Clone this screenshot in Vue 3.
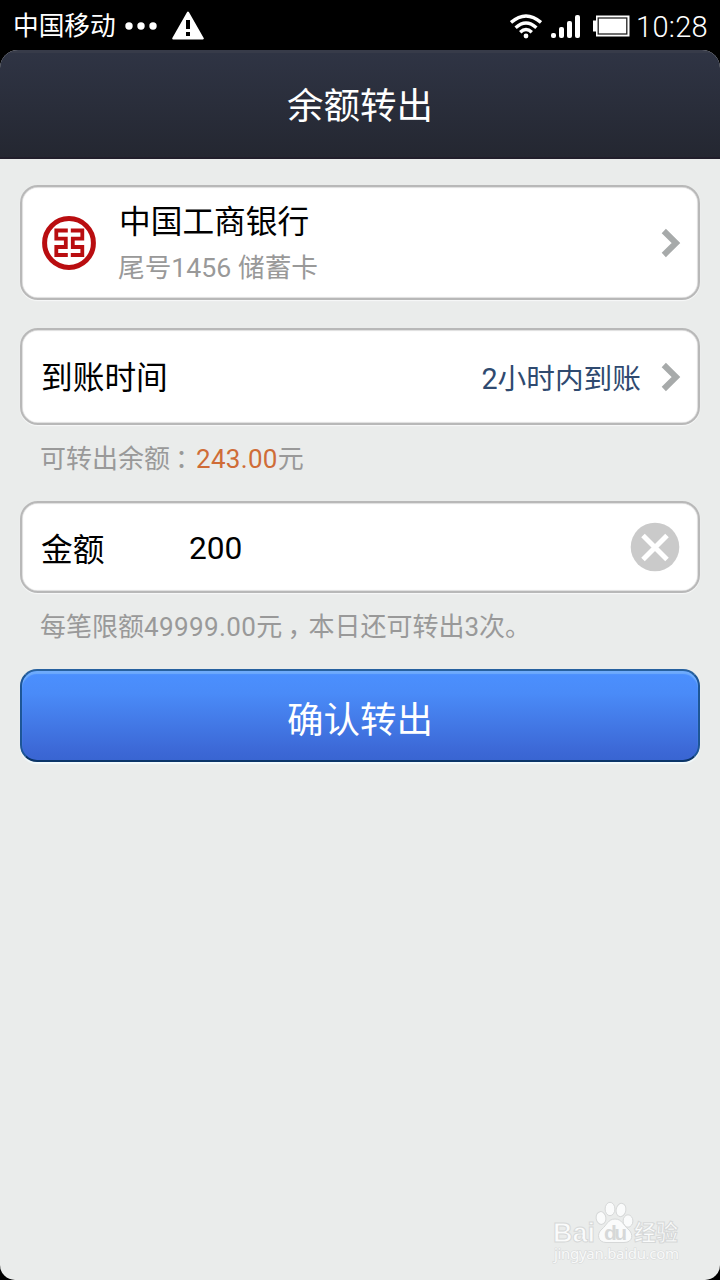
<script setup>
import { ref } from 'vue'

const amount = ref('200')
const bars = [5, 11, 17, 23]
</script>

<template>
  <div class="screen">
    <header class="status">
      <span class="carrier">中国移动</span>
      <svg class="dots" width="32" height="8" viewBox="0 0 32 8" fill="#fff">
        <circle cx="4" cy="4" r="3.7" /><circle cx="16" cy="4" r="3.7" /><circle cx="28" cy="4" r="3.7" />
      </svg>
      <svg class="warn" width="32" height="29" viewBox="0 0 32 29">
        <path d="M16 1.5 30.8 27.5H1.2Z" fill="#fff" stroke="#fff" stroke-width="2" stroke-linejoin="round" />
        <path d="M14 9h4v9h-4zM14 21h4v4h-4z" fill="#000" />
      </svg>
      <span class="spacer"></span>
      <svg class="wifi" width="32" height="25" viewBox="0 0 32 25" fill="none" stroke="#fff" stroke-width="3.4">
        <path d="M1 8.5Q16-4.5 31 8.5" />
        <path d="M5.6 13.7Q16 4.2 26.4 13.7" />
        <path d="M10.2 18.3Q16 12.6 21.8 18.3" />
        <circle cx="16" cy="22" r="2.4" fill="#fff" stroke="none" />
      </svg>
      <div class="signal">
        <i v-for="h in bars" :key="h" :style="{ height: h + 'px' }"></i>
      </div>
      <svg class="battery" width="37" height="22" viewBox="0 0 37 22">
        <path d="M3 .5h33.500v21H3v-5H0v-11h3z" fill="#fff" />
        <rect x="5.200" y="3" width="28.600" height="16" fill="#fff" stroke="#222" stroke-width="1.300" />
      </svg>
      <span class="clock">10:28</span>
    </header>

    <div class="app">
      <div class="titlebar"><h1>余额转出</h1></div>

      <main>
        <section class="card bank">
          <svg class="logo" width="56" height="56" viewBox="0 0 56 56" fill="none" stroke="#b90d10">
            <circle cx="28" cy="28" r="24.400" stroke-width="5" />
            <g stroke-width="3.800">
              <path d="M26.800 15.500H15.300V23.700H24.800V32H15.300V40H26.800" />
              <path d="M29.800 15.500H41.300V23.700H31.800V32H41.300V40H29.800" />
            </g>
          </svg>
          <div class="info">
            <div class="name">中国工商银行</div>
            <div class="tail">尾号1456 储蓄卡</div>
          </div>
          <svg class="chev" width="20" height="30" viewBox="0 0 20 30"><path d="M2.800 3 15 15 2.800 27" fill="none" stroke="#a7aaaa" stroke-width="6" /></svg>
        </section>

        <section class="card arrival">
          <span class="label">到账时间</span>
          <span class="when">2小时内到账</span>
          <svg class="chev" width="20" height="30" viewBox="0 0 20 30"><path d="M2.800 3 15 15 2.800 27" fill="none" stroke="#a7aaaa" stroke-width="6" /></svg>
        </section>

        <p class="note balance">可转出余额<span class="mark">：</span><b>243.00</b>元</p>

        <section class="card amount">
          <span class="label">金额</span>
          <span class="value">{{ amount }}</span>
          <svg class="clear" width="50" height="50" viewBox="0 0 50 50" @click="amount = ''">
            <circle cx="25" cy="25" r="24.300" fill="#cacaca" />
            <path d="M13 13.500 37 37.500M37 13.500 13 37.500" stroke="#fff" stroke-width="5" />
          </svg>
        </section>

        <p class="note limit">每笔限额<span class="num">49999.00</span>元<span class="mark">，</span>本日还可转出3次。</p>

        <button class="confirm">确认转出</button>
      </main>

      <svg class="watermark" width="132" height="68" viewBox="0 0 132 68">
        <g fill="#fafbfb" stroke="#d6d8d8" stroke-width="1">
          <ellipse cx="50" cy="21" rx="4.900" ry="6.400" transform="rotate(-8 50 21)" />
          <ellipse cx="59" cy="12" rx="4.900" ry="6.700" />
          <ellipse cx="70" cy="13" rx="4.900" ry="6.700" transform="rotate(12 70 13)" />
          <ellipse cx="77" cy="24" rx="4.900" ry="6.200" />
          <path d="M64 22C57 22 56 28 51 32C45 37 47 45.500 55 45.500H73C82 45.500 83 37 77 32C72 28 71 22 64 22Z" />
          <text class="brand" x="2" y="45" textLength="42" lengthAdjust="spacingAndGlyphs">Bai</text>
          <text class="cn" x="83" y="43" textLength="44">经验</text>
        </g>
        <text class="du" x="53" y="43" textLength="23">du</text>
        <text class="site" x="3" y="62" textLength="125">jingyan.baidu.com</text>
      </svg>
    </div>
  </div>
</template>

<style>
html, body { margin: 0; background: #000; }
</style>

<style scoped>
.screen {
  width: 720px; height: 1280px; overflow: hidden; background: #000;
  display: flex; flex-direction: column;
  font-family: Roboto, "Noto Sans CJK SC", sans-serif;
  font-weight: 400;
}
.status {
  height: 50px; flex: none; display: flex; align-items: center;
  padding: 0 12px 0 13px; color: #fff; box-sizing: border-box;
}
.carrier { font-size: 25.700px; line-height: 50px; padding-top: 1px; }
.dots { margin: 1px 0 0 9px; }
.warn { margin-left: 15px; }
.spacer { flex: 1; }
.wifi { margin-top: 2px; }
.signal { display: flex; align-items: flex-end; gap: 3px; height: 23px; margin: 3px 0 0 9px; }
.signal i { width: 5px; background: #fff; border-radius: 2px; }
.battery { margin: 2px 6px 0 13px; }
.clock { font: 300 29px/50px Roboto, sans-serif; letter-spacing: .3px; width: 72px; white-space: nowrap; padding-top: 4px; }
.app {
  position: relative; flex: 1; overflow: hidden; background: #eaeceb;
  border-radius: 18px 18px 15px 15px;
}
.titlebar {
  height: 109px; box-sizing: border-box; display: flex; align-items: center; justify-content: center;
  background: linear-gradient(#2f3444, #242731);
  border-top: 3px solid #373b49; border-bottom: 2px solid #211e2b;
}
h1 { margin: 0; padding-top: 3px; font-size: 36.500px; font-weight: 400; line-height: 54px; color: #fff; }
main { padding: 26px 20px 0; display: flex; flex-direction: column; }
.card {
  box-sizing: border-box; background: #fff; border: 2px solid #b8b8b8; border-radius: 18px;
  box-shadow: 0 1px 1px #f8f9f9, inset 0 0 1px 0.500px #c4c4c4;
  display: flex; align-items: center; padding: 0 17px 0 19px;
}
.bank { height: 115px; }
.logo { flex: none; margin: 1px 22px 0 0; }
.info { flex: 1; padding-top: 6px; }
.name { font-size: 31.700px; line-height: 44px; color: #000; margin-top: -3px; }
.tail { font-size: 26.700px; line-height: 40px; color: #999; margin: 3px 0 0 -1px; }
.chev { flex: none; }
.arrival { height: 97px; margin-top: 28px; }
.label { font-size: 31.700px; line-height: 46px; color: #000; padding-top: 5px; }
.when { margin-left: auto; margin-right: 20px; font-size: 28.700px; color: #2f4a70; }
.note { margin: 0; padding-left: 20px; font-size: 26px; line-height: 40px; color: #999; white-space: nowrap; }
.note b { font-weight: 400; color: #cf6c37; letter-spacing: .3px; }
.num { letter-spacing: .400px; }
.mark { padding-left: 5px; letter-spacing: -5px; }
.balance { margin-top: 14px; }
.amount { height: 92px; margin-top: 22px; }
.amount .label { width: 148px; padding-top: 8px; }
.value { font-size: 31.700px; color: #000; flex: 1; padding-top: 3px; }
.amount .clear { margin-right: 1px; }
.limit { margin-top: 14px; }
.confirm {
  height: 93px; margin-top: 22px; border: 2px solid; border-color: #27619f #1d5696 #0b3568;
  border-radius: 17px; background: linear-gradient(#4b90ff, #4a8bf8 25%, #3c68d6 90%, #3965d2);
  box-shadow: inset 0 3px 1px #6eabfc, 0 2px 1px #f2fafd; padding: 10px 0 0;
  font: 400 36.500px/54px Roboto, "Noto Sans CJK SC", sans-serif; color: #fff;
}
.watermark { position: absolute; right: 37px; bottom: 15px; }
.brand { font: 700 28px "Liberation Sans", sans-serif; }
.cn { font: 700 22px "Noto Sans CJK SC", sans-serif; }
.du { font: 700 21px "Liberation Sans", sans-serif; fill: #d6d8d8; }
.site { font: 400 15px "Noto Sans", sans-serif; fill: #f8f9f9; stroke: #d8dada; stroke-width: 1.200px; paint-order: stroke; }
</style>
